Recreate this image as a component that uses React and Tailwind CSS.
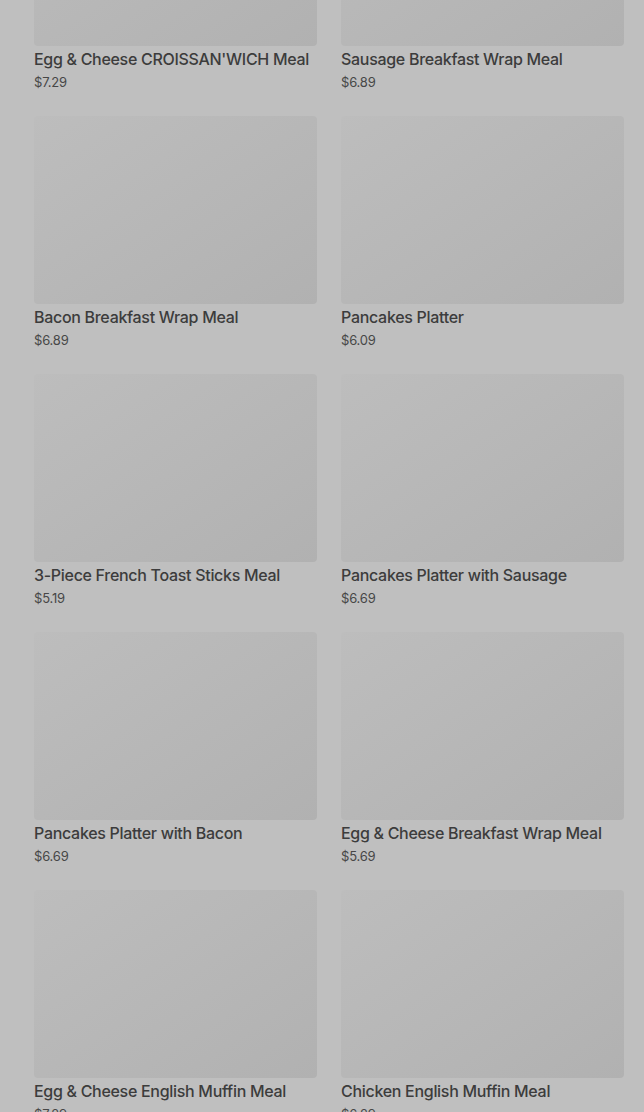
const items = [
  { name: "Egg & Cheese CROISSAN'WICH Meal", price: '$7.29' },
  { name: 'Sausage Breakfast Wrap Meal', price: '$6.89' },
  { name: 'Bacon Breakfast Wrap Meal', price: '$6.89' },
  { name: 'Pancakes Platter', price: '$6.09' },
  { name: '3-Piece French Toast Sticks Meal', price: '$5.19' },
  { name: 'Pancakes Platter with Sausage', price: '$6.69' },
  { name: 'Pancakes Platter with Bacon', price: '$6.69' },
  { name: 'Egg & Cheese Breakfast Wrap Meal', price: '$5.69' },
  { name: 'Egg & Cheese English Muffin Meal', price: '$7.29' },
  { name: 'Chicken English Muffin Meal', price: '$6.29' },
];

export default function App() {
  return (
    <div className="h-[1112px] w-[644px] overflow-hidden bg-[#bfbfbf] font-['Inter',sans-serif]">
      <div className="mt-[-142px] grid grid-cols-2 gap-x-6 gap-y-6 pl-[34px] pr-[20px]">
        {items.map((item) => (
          <div key={item.name}>
            <div className="h-[188px] rounded-sm bg-gradient-to-br from-[#bdbdbd] to-[#b1b1b1]" />
            <h3 className="h-[26px] whitespace-nowrap text-[16px] font-medium leading-[26px] tracking-[-0.3px] text-[#3c3c3c]">{item.name}</h3>
            <p className="h-[20px] text-[13px] leading-[20px] tracking-[-0.2px] text-[#474747]">{item.price}</p>
          </div>
        ))}
      </div>
    </div>
  );
}
